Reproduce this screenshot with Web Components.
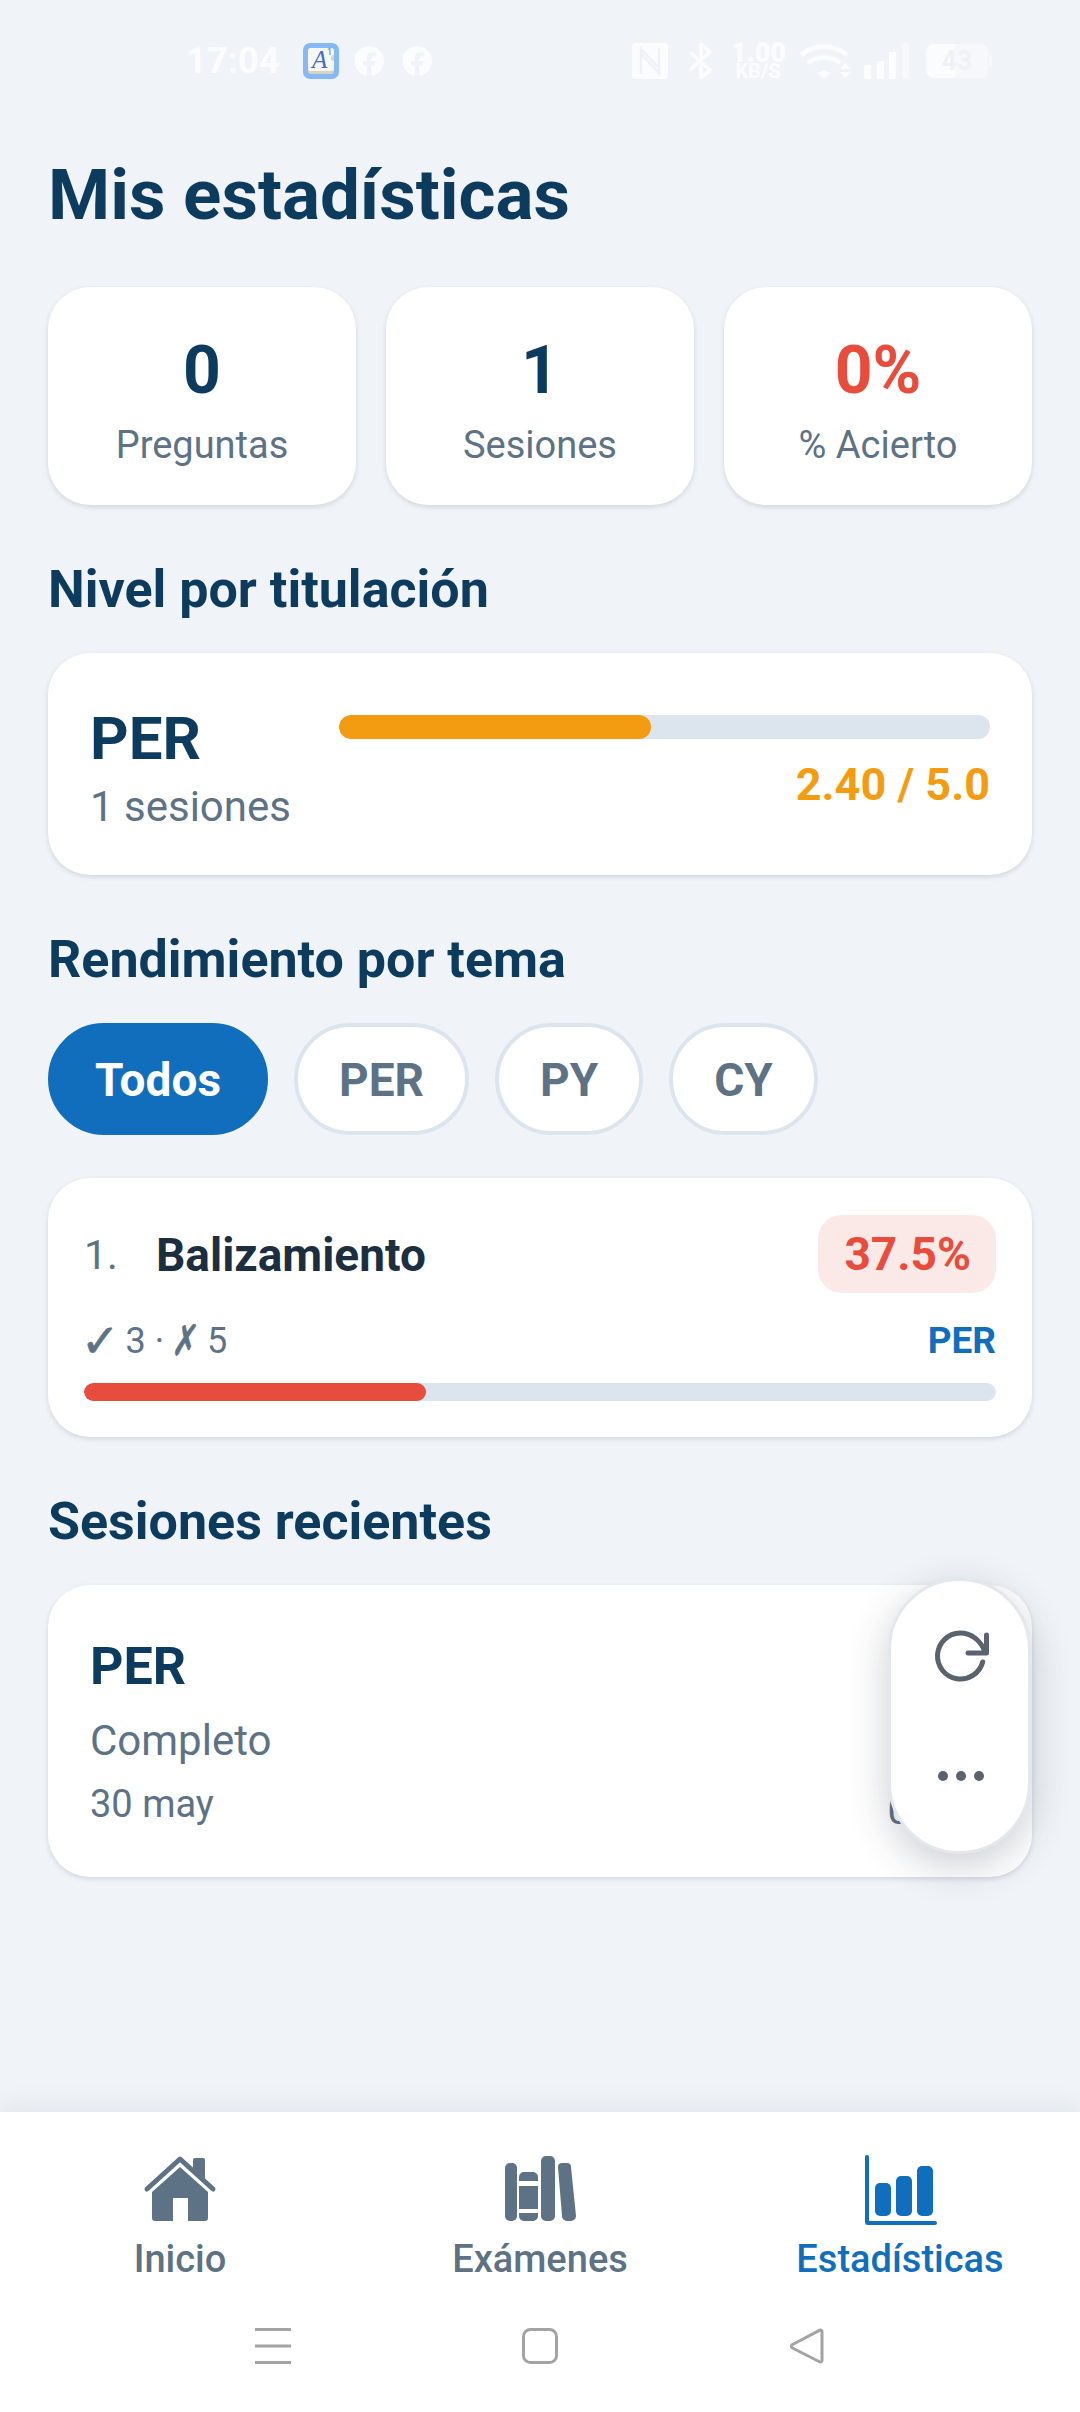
<!DOCTYPE html>
<html lang="es">
<head>
<meta charset="utf-8">
<title>Mis estadísticas</title>
<style>
  html, body { margin: 0; padding: 0; }
  body {
    width: 1080px;
    height: 2412px;
    overflow: hidden;
    position: relative;
    display: flex;
    flex-direction: column;
    background: #f0f4f8;
    font-family: Roboto, "Liberation Sans", sans-serif;
  }
</style>
</head>
<body>
<status-bar></status-bar>
<stats-page>
  <page-title>Mis estadísticas</page-title>
  <stat-row>
    <stat-card value="0" label="Preguntas"></stat-card>
    <stat-card value="1" label="Sesiones"></stat-card>
    <stat-card value="0%" label="% Acierto" tone="bad"></stat-card>
  </stat-row>
  <section-title>Nivel por titulación</section-title>
  <level-card name="PER" sessions="1 sesiones" score="2.40 / 5.0" percent="48"></level-card>
  <section-title>Rendimiento por tema</section-title>
  <chip-row>
    <filter-chip active>Todos</filter-chip>
    <filter-chip>PER</filter-chip>
    <filter-chip>PY</filter-chip>
    <filter-chip>CY</filter-chip>
  </chip-row>
  <topic-card index="1." name="Balizamiento" percent="37.5" ok="3" ko="5" tag="PER"></topic-card>
  <section-title>Sesiones recientes</section-title>
  <session-card name="PER" kind="Completo" date="30 may" score="0"></session-card>
</stats-page>
<bottom-nav>
  <nav-item label="Inicio" icon="home"></nav-item>
  <nav-item label="Exámenes" icon="books"></nav-item>
  <nav-item label="Estadísticas" icon="chart" active></nav-item>
</bottom-nav>
<system-nav></system-nav>
<float-widget></float-widget>

<script>
// small helper, every element below is the same shape
function define(tag, css, html) {
  customElements.define(tag, class extends HTMLElement {
    constructor() {
      super();
      this.attachShadow({ mode: 'open' });
    }
    connectedCallback() {
      const get = (n) => this.getAttribute(n) || '';
      this.shadowRoot.innerHTML = `<style>${css}</style>` + (typeof html === 'function' ? html(get) : html);
    }
  });
}

const SB = '#fbfcfe';
const FB = 'M15 0a15 15 0 0 1 2.5 29.8V19.4h3.4l.7-4.3h-4.1v-2.6c0-1.2.6-2.3 2.4-2.3h1.9V6.5s-1.7-.3-3.3-.3c-3.4 0-5.6 2-5.6 5.7v3.2H9.1v4.3h3.8v10.4A15 15 0 0 1 15 0z';

define('status-bar', `
  :host { display: flex; align-items: center; height: 122px; flex: none; padding-left: 186px; box-sizing: border-box; color: ${SB}; }
  .time { font: 700 36px/1 Roboto, sans-serif; width: 92px; letter-spacing: .2px; white-space: nowrap; }
  svg { display: block; flex: none; }
  .speed { width: 54px; margin-left: 19px; text-align: center; font-weight: 700; line-height: 1; white-space: nowrap; }
  .speed b { display: block; font-size: 27px; height: 20px; line-height: 20px; }
  .speed i { display: block; font-style: normal; font-size: 20px; height: 16px; line-height: 16px; }
  .bat { position: relative; margin-left: 16px; width: 66px; height: 34px; }
  .bat span { position: absolute; inset: 0 4px 0 0; text-align: center; font: 700 27px/34px Roboto, sans-serif; color: #eef1f5; }
  .bat svg { position: absolute; inset: 0; }
`, `
  <span class="time">17:04</span>
  <svg style="margin-left:25px" width="36" height="36" viewBox="0 0 36 36">
    <rect width="36" height="36" rx="7" fill="#85b9f6"/>
    <rect x="5" y="5" width="26" height="26" rx="3" fill="#d9d3c1"/>
    <path d="M5 8a3 3 0 0 1 3-3h20a3 3 0 0 1 3 3v4a3 3 0 0 0 0 6v7a3 3 0 0 1-3 3H8a3 3 0 0 1-3-3z" fill="#f8f7f1"/>
    <text x="9" y="25" font-family="Liberation Serif" font-style="italic" font-size="25" fill="#3f6fc6">A</text>
    <text x="24" y="12" font-family="Roboto" font-size="9" fill="#3f6fc6">1</text>
  </svg>
  <svg style="margin-left:15px" width="30" height="30" viewBox="0 0 30 30"><path fill="${SB}" fill-rule="evenodd" d="${FB}"/></svg>
  <svg style="margin-left:18px" width="30" height="30" viewBox="0 0 30 30"><path fill="${SB}" fill-rule="evenodd" d="${FB}"/></svg>
  <svg style="margin-left:200px" width="36" height="36" viewBox="0 0 36 36">
    <rect width="36" height="36" rx="4" fill="${SB}"/>
    <path d="M9 31V6l17 18M27 5v25L10 12" fill="none" stroke="#eef1f5" stroke-width="2.5"/>
  </svg>
  <svg style="margin-left:22px" width="22" height="36" viewBox="0 0 22 36">
    <path d="M1 10l19 17-9 8V1l9 8L1 26" fill="none" stroke="${SB}" stroke-width="3.5" stroke-linejoin="round" stroke-linecap="round"/>
  </svg>
  <div class="speed"><b>1.00</b><i>KB/S</i></div>
  <svg style="margin-left:15px" width="52" height="36" viewBox="0 0 52 36">
    <g fill="none" stroke="${SB}" stroke-width="4.5">
      <path d="M1 12c12-11 34-11 46 0"/><path d="M8 20c8-7 24-7 32 0"/>
    </g>
    <path d="M18 30l6-3 6 3-6 6zM40 26l5.5-6 5.5 6zM40 29h11l-5.5 6z" fill="${SB}"/>
  </svg>
  <svg style="margin-left:12px" width="46" height="36" viewBox="0 0 46 36">
    <rect x="0" y="22" width="7" height="14" rx="1" fill="${SB}"/>
    <rect x="13" y="18" width="7" height="18" rx="1" fill="${SB}"/>
    <rect x="25" y="9" width="7" height="27" rx="1" fill="${SB}"/>
    <rect x="38" y="0" width="7" height="36" rx="1" fill="#f6f8fb"/>
  </svg>
  <div class="bat">
    <svg width="66" height="34" viewBox="0 0 66 34">
      <rect width="62" height="34" rx="8" fill="#f6f8fb"/>
      <path d="M8 0h21v34H8a8 8 0 0 1-8-8V8a8 8 0 0 1 8-8z" fill="${SB}"/>
      <path d="M63 11h1a2 2 0 0 1 2 2v8a2 2 0 0 1-2 2h-1z" fill="#f6f8fb"/>
    </svg>
    <span>43</span>
  </div>
`);

define('stats-page', `
  :host { display: flex; flex-direction: column; flex: 1; padding: 0 48px; min-height: 0; }
`, `<slot></slot>`);

define('page-title', `
  :host { display: block; margin-top: 31px; font: 700 71px/84px Roboto, sans-serif; color: #0d3b5e; }
`, `<slot></slot>`);

define('stat-row', `
  :host { display: grid; grid-template-columns: repeat(3, 1fr); gap: 30px; margin-top: 50px; }
`, `<slot></slot>`);

const CARD = `background: #fff; border-radius: 42px; box-shadow: 0 2px 5px rgba(30,50,70,.15); box-sizing: border-box;`;

define('stat-card', `
  :host { display: flex; flex-direction: column; align-items: center; height: 218px; padding-top: 46px; ${CARD} }
  .v { font: 700 66px/76px Roboto, sans-serif; color: #0d3b5e; }
  .v.bad { color: #e74c3c; }
  .l { font: 400 38px/44px Roboto, sans-serif; color: #5d7285; margin-top: 14px; }
`, (get) => `
  <div class="v ${get('tone')}">${get('value')}</div>
  <div class="l">${get('label')}</div>
`);

define('section-title', `
  :host { display: block; margin-top: 57px; margin-bottom: 35px; font: 700 52px/56px Roboto, sans-serif; color: #0d3b5e; }
`, `<slot></slot>`);

define('level-card', `
  :host { display: flex; justify-content: space-between; height: 222px; padding: 0 42px; align-items: flex-start; ${CARD} }
  .left { padding-top: 53px; }
  .n { font: 700 60px/66px Roboto, sans-serif; color: #0d3b5e; }
  .s { font: 400 42px/46px Roboto, sans-serif; color: #5d7285; margin-top: 12px; }
  .r { width: 651px; padding-top: 62px; }
  .bar { height: 24px; border-radius: 12px; background: #dce5ee; overflow: hidden; }
  .fill { height: 100%; border-radius: 12px; background: #f39c12; }
  .score { text-align: right; font: 700 45px/52px Roboto, sans-serif; color: #f39c12; margin-top: 20px; }
`, (get) => `
  <div class="left"><div class="n">${get('name')}</div><div class="s">${get('sessions')}</div></div>
  <div class="r">
    <div class="bar"><div class="fill" style="width:${get('percent')}%"></div></div>
    <div class="score">${get('score')}</div>
  </div>
`);

define('chip-row', `
  :host { display: flex; gap: 26px; margin-bottom: 43px; }
`, `<slot></slot>`);

define('filter-chip', `
  :host { display: block; box-sizing: border-box; height: 112px; padding: 0 41px; border-radius: 56px; border: 4px solid #dce5ee; background: #fff; color: #5d7285; font: 700 46px/106px Roboto, sans-serif; }
  :host([active]) { padding: 0 43px; background: #116ebd; border-color: #116ebd; color: #fff; }
`, `<slot></slot>`);

define('topic-card', `
  :host { display: block; height: 259px; padding: 37px 36px 0; ${CARD} }
  .top, .mid { display: flex; align-items: center; justify-content: space-between; }
  .top { height: 78px; }
  .left { display: flex; align-items: center; padding-top: 2px; }
  .i { width: 72px; font: 400 41px/1 Roboto, sans-serif; color: #5d7285; }
  .name { font: 700 46px/1 Roboto, sans-serif; color: #1c2e3f; }
  .badge { background: #fbe9e7; color: #e74c3c; border-radius: 24px; font: 700 46px/78px Roboto, sans-serif; padding: 0 25px 0 26px; }
  .mid { height: 44px; margin-top: 26px; }
  .st { display: flex; align-items: center; height: 44px; margin-left: -3px; font: 400 36px/44px Roboto, sans-serif; color: #5d7285; white-space: pre; }
  .g { display: inline-block; margin-right: -3px; font: 700 46px/44px "DejaVu Sans", sans-serif; -webkit-text-stroke: .8px #5d7285; }
  .g.x { font-size: 42px; transform: scaleX(.72) skewX(-8deg); margin: 0 -5px; }
  .tag { font: 700 37px/44px Roboto, sans-serif; color: #116ebd; }
  .bar { height: 18px; border-radius: 9px; background: #dce5ee; margin-top: 20px; overflow: hidden; }
  .fill { height: 100%; border-radius: 9px; background: #e74c3c; }
`, (get) => `
  <div class="top">
    <div class="left"><span class="i">${get('index')}</span><span class="name">${get('name')}</span></div>
    <span class="badge">${get('percent')}%</span>
  </div>
  <div class="mid">
    <span class="st"><span class="g">✓</span> ${get('ok')} · <span class="g x">✗</span> ${get('ko')}</span>
    <span class="tag">${get('tag')}</span>
  </div>
  <div class="bar"><div class="fill" style="width:${get('percent')}%"></div></div>
`);

define('session-card', `
  :host { display: flex; justify-content: space-between; height: 292px; padding: 50px 42px 0; ${CARD} }
  .n { font: 700 52px/64px Roboto, sans-serif; color: #0d3b5e; }
  .k { font: 400 42px/48px Roboto, sans-serif; color: #5d7285; margin-top: 18px; }
  .d { font: 400 38px/44px Roboto, sans-serif; color: #5d7285; margin-top: 17px; }
  .sc { align-self: flex-start; margin: 152px 80px 0 0; font: 400 40px/48px Roboto, sans-serif; color: #5d7285; }
`, (get) => `
  <div><div class="n">${get('name')}</div><div class="k">${get('kind')}</div><div class="d">${get('date')}</div></div>
  <div class="sc">${get('score')}</div>
`);

define('bottom-nav', `
  :host { display: grid; grid-template-columns: repeat(3, 1fr); flex: none; height: 196px; background: #fff; padding-top: 43px; box-sizing: border-box; box-shadow: 0 -8px 22px rgba(40,60,80,.07); position: relative; }
`, `<slot></slot>`);

const NAV_ICONS = {
  home: `<svg width="80" height="72" viewBox="0 0 80 72">
    <path d="M7 34L40 4l33 30" fill="none" stroke="currentColor" stroke-width="5" stroke-linecap="round" stroke-linejoin="round"/>
    <path d="M53 5a2 2 0 0 1 2-2h8a2 2 0 0 1 2 2v19L53 13z" fill="currentColor"/>
    <path d="M40 12L12 37v26a3 3 0 0 0 3 3h18V43h15v23h17a3 3 0 0 0 3-3V37z" fill="currentColor"/>
  </svg>`,
  books: `<svg width="80" height="72" viewBox="0 0 80 72">
    <rect x="5" y="8" width="12" height="58" rx="5" fill="currentColor"/>
    <path d="M19 22a5 5 0 0 1 5-5h9a5 5 0 0 1 5 5v4H19zM19 31h19v23H19zM19 58h19v3a5 5 0 0 1-5 5h-9a5 5 0 0 1-5-5z" fill="currentColor"/>
    <rect x="41" y="1" width="14" height="65" rx="5" fill="currentColor"/>
    <path d="M58 12a4 4 0 0 1 4-4h5a4 4 0 0 1 4 4l5 49a5 5 0 0 1-5 5h-4a5 5 0 0 1-5-5z" fill="currentColor"/>
  </svg>`,
  chart: `<svg width="80" height="72" viewBox="0 0 80 72">
    <path d="M7 2v65a1 1 0 0 0 1 1h67" fill="none" stroke="currentColor" stroke-width="4" stroke-linecap="round"/>
    <rect x="15" y="28" width="16" height="33" rx="5" fill="currentColor"/>
    <rect x="36" y="21" width="16" height="40" rx="5" fill="currentColor"/>
    <rect x="57" y="11" width="16" height="50" rx="5" fill="currentColor"/>
  </svg>`
};

define('nav-item', `
  :host { display: flex; flex-direction: column; align-items: center; color: #5d7285; }
  :host([active]) { color: #116ebd; }
  svg { display: block; }
  .l { font: 500 38px/44px Roboto, sans-serif; margin-top: 10px; }
`, (get) => `${NAV_ICONS[get('icon')]}<div class="l">${get('label')}</div>`);

define('system-nav', `
  :host { display: block; flex: none; height: 104px; background: #fff; position: relative; }
  .row { display: grid; grid-template-columns: 36px 36px 36px; column-gap: 231px; justify-content: center; padding-top: 20px; }
  svg { display: block; }
`, `
  <div class="row">
    <svg width="36" height="36" viewBox="0 0 36 36"><path d="M0 1.5h36M0 18h36M0 34.5h36" stroke="#a3a3a3" stroke-width="3"/></svg>
    <svg width="36" height="36" viewBox="0 0 36 36"><rect x="1.5" y="1.5" width="33" height="33" rx="7" fill="none" stroke="#a3a3a3" stroke-width="3"/></svg>
    <svg width="36" height="36" viewBox="0 0 36 36"><path d="M33 3.5c0-1.5-1.5-2-3-.8L3.5 16.5c-1.5 1-1.5 2.5 0 3.5L30 33.5c1.5 1 3 .5 3-1z" fill="none" stroke="#a3a3a3" stroke-width="3" stroke-linejoin="round"/></svg>
  </div>
`);

// floating system widget sits over the last card
define('float-widget', `
  :host { position: absolute; left: 888px; top: 1578px; width: 143px; height: 276px; box-sizing: border-box; border: 3px solid #e4e7ec; border-radius: 72px; background: #fff; box-shadow: 0 12px 40px rgba(40,50,70,.24); }
  svg { position: absolute; display: block; }
`, `
  <svg style="left:39px;top:47px" width="60" height="60" viewBox="0 0 60 60">
    <path d="M55 24C51 13 42 5 30 5a23 23 0 1 0 22.7 29" fill="none" stroke="#5a626d" stroke-width="5" stroke-linecap="round"/>
    <path d="M56.5 7v18H38" fill="none" stroke="#5a626d" stroke-width="5" stroke-linecap="round" stroke-linejoin="round"/>
  </svg>
  <svg style="left:46px;top:188px" width="48" height="14" viewBox="0 0 48 14">
    <circle cx="6" cy="7" r="5" fill="#5a626d"/><circle cx="24" cy="7" r="5" fill="#5a626d"/><circle cx="42" cy="7" r="5" fill="#5a626d"/>
  </svg>
`);
</script>
</body>
</html>
